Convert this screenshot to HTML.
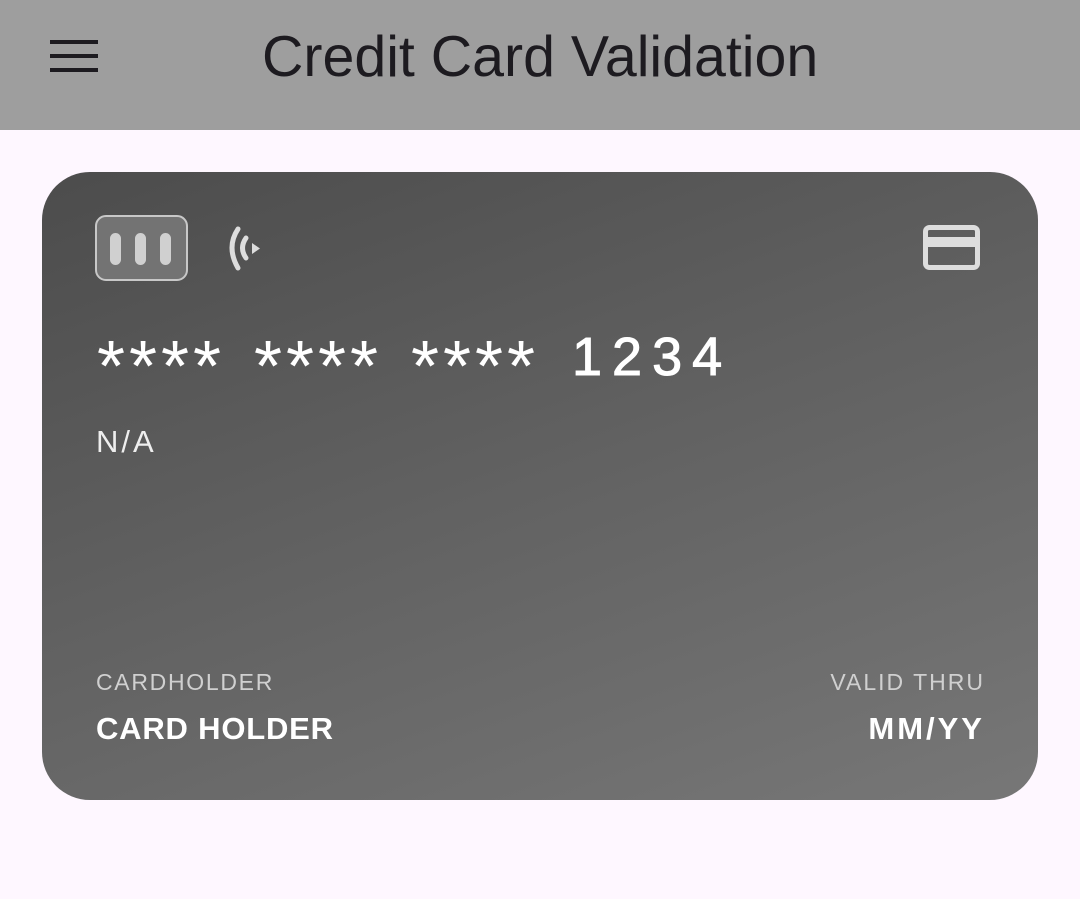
<!DOCTYPE html>
<html><head><style>
body{margin:0;width:1080px;height:899px;background:#fef7ff;font-family:"Liberation Sans",Roboto,sans-serif;position:relative;overflow:hidden}
.hdr{position:absolute;left:0;top:0;width:1080px;height:130px;background:#9e9e9e}
.ham{position:absolute;left:50px;width:48px;height:4px;background:#1d1b20}
.title{position:absolute;left:262px;top:24px;font-size:57.3px;color:#1d1b20}
.card{position:absolute;left:42px;top:172px;width:996px;height:628px;border-radius:48px;background:linear-gradient(160deg,#4c4c4c 0%,#626262 50%,#777 100%)}
.chip{position:absolute;left:95px;top:215px;width:89px;height:62px;border:2px solid #c8c8c8;border-radius:11px;background:#737373}
.bar{position:absolute;top:233px;width:11px;height:32px;border-radius:6px;background:#d0d0d0}
.t{position:absolute;color:#fff;white-space:nowrap}
.st{font-size:72px;letter-spacing:4px;top:331px;line-height:72px}
</style></head><body>
<div class="hdr">
<div class="ham" style="top:40px"></div><div class="ham" style="top:54px"></div><div class="ham" style="top:68px"></div>
<div class="title">Credit Card Validation</div>
</div>
<div class="card"></div>
<div class="chip"></div>
<div class="bar" style="left:110px"></div><div class="bar" style="left:135px"></div><div class="bar" style="left:160px"></div>
<svg style="position:absolute;left:224px;top:224px" width="44" height="50" viewBox="0 0 44 50">
<path d="M14 5 Q2 23 14 44" stroke="#ddd" stroke-width="5" fill="none" stroke-linecap="round"/>
<path d="M22 14 Q15 24 22 34" stroke="#ddd" stroke-width="5" fill="none" stroke-linecap="round"/>
<path d="M28 19 L36 24.5 L28 30 Z" fill="#ddd"/>
</svg>
<svg style="position:absolute;left:923px;top:225px" width="57" height="45" viewBox="0 0 57 45">
<rect x="2.5" y="2.5" width="52" height="40" rx="4" fill="none" stroke="#ddd" stroke-width="5"/>
<rect x="2" y="12" width="53" height="10" fill="#ddd"/>
</svg>
<div class="t st" style="left:97px">****</div>
<div class="t st" style="left:254px">****</div>
<div class="t st" style="left:411px">****</div>
<div class="t" style="left:572px;top:326px;font-size:54px;font-weight:500;letter-spacing:10px;-webkit-text-stroke:1px #fff">1234</div>
<div class="t" style="left:96px;top:424px;font-size:31px;letter-spacing:3px;color:#eee">N/A</div>
<div class="t" style="left:96px;top:669px;font-size:23px;letter-spacing:1.7px;color:#d0d0d0">CARDHOLDER</div>
<div class="t" style="left:96px;top:711px;font-size:31px;font-weight:bold;letter-spacing:0.8px">CARD HOLDER</div>
<div class="t" style="right:95px;top:669px;font-size:23px;letter-spacing:2px;color:#d0d0d0">VALID THRU</div>
<div class="t" style="right:95px;top:711px;font-size:31px;font-weight:bold;letter-spacing:3px">MM/YY</div>
</body></html>
